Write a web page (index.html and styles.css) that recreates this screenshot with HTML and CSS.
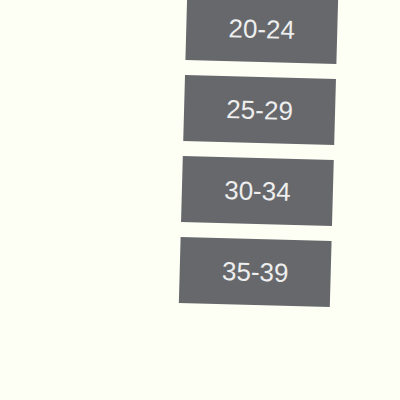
FILE: index.html
```html
<!DOCTYPE html>
<html>
<head>
<meta charset="utf-8">
<link rel="stylesheet" href="styles.css">
</head>
<body>
<div class="stack">
  <div class="tag">20-24</div>
  <div class="tag">25-29</div>
  <div class="tag">30-34</div>
  <div class="tag">35-39</div>
</div>
</body>
</html>
```
FILE: styles.css
```css
html, body {
  margin: 0;
  padding: 0;
  background: #fdfff4;
  width: 400px;
  height: 400px;
  overflow: hidden;
}
.stack {
  margin: -4px 0 0 183px;
  width: 151px;
  display: flex;
  flex-direction: column;
  gap: 15px;
  transform: rotate(1.55deg);
  transform-origin: 50% 50%;
}
.tag {
  height: 66px;
  background: #66686c;
  color: #eeeeee;
  font-family: "Liberation Sans", Arial, sans-serif;
  font-size: 26px;
  display: flex;
  align-items: center;
  justify-content: center;
}
```
